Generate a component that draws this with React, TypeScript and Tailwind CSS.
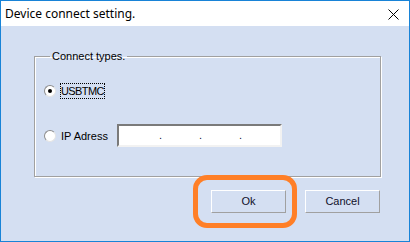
import React from 'react';

const body = { fontFamily: '"Liberation Sans", Arial, sans-serif' };

function Radio({ checked }: { checked?: boolean }) {
  return (
    <div className="w-[12px] h-[12px] rounded-full bg-white border border-t-[#8c8c8c] border-l-[#8c8c8c] border-r-[#e4e4e4] border-b-[#e4e4e4] flex items-center justify-center shrink-0">
      {checked && <div className="w-[4px] h-[4px] rounded-full bg-black" />}
    </div>
  );
}

function Button({ label }: { label: string }) {
  return (
    <button className="w-[75px] h-[23px] border border-t-white border-l-white border-r-[#a0a0a0] border-b-[#a0a0a0] bg-transparent text-[11px] text-[#10102a] leading-none flex items-center justify-center">
      {label}
    </button>
  );
}

export default function App() {
  return (
    <div className="relative w-[410px] h-[242px] border border-[#1883d7] bg-[#d4dff2] flex flex-col overflow-hidden" style={body}>
      <div className="h-[25px] bg-white flex items-center justify-between pl-[4px] pr-[10px] shrink-0">
        <span className="text-[12px] text-black" style={{ fontFamily: '"Noto Sans", "Open Sans", sans-serif' }}>
          Device connect setting.
        </span>
        <svg width="11" height="11" viewBox="0 0 11 11" className="mt-[1px]">
          <path d="M0.5 0.5 L10.5 10.5 M10.5 0.5 L0.5 10.5" stroke="#000" strokeWidth="1" fill="none" />
        </svg>
      </div>

      <div className="flex flex-col pl-[33px] pr-[27px] pt-[24px]">
        <fieldset className="w-[347px] h-[127px] border border-[#a0a0a0] shadow-[1px_1px_0_#fff,inset_1px_1px_0_#fff] pl-[9px]">
          <legend className="ml-[6px] px-[2px] text-[11px] leading-[13px] text-black">Connect types.</legend>
          <div className="flex items-center mt-[20px] h-[16px]">
            <Radio checked />
            <span className="ml-[4px] border border-dotted border-black px-[0px] text-[11px] leading-[14px] text-black tracking-[-0.6px]">
              USBTMC
            </span>
          </div>
          <div className="flex items-center mt-[25px] h-[23px]">
            <Radio />
            <span className="ml-[5px] text-[11px] leading-[14px] text-black">IP Adress</span>
            <div className="ml-[9px] w-[165px] h-[23px] bg-white border-2 border-t-[#7a7a7a] border-l-[#7a7a7a] border-r-[#f2f2f2] border-b-[#f2f2f2] flex items-center pl-[40px] text-[11px] text-[#101040]">
              <span className="w-[40px]">.</span>
              <span className="w-[40px]">.</span>
              <span className="w-[40px]">.</span>
            </div>
          </div>
        </fieldset>

        <div className="flex justify-end gap-[19px] pr-[2px] mt-[13px]">
          <Button label="Ok" />
          <Button label="Cancel" />
        </div>
      </div>

      <div className="absolute left-[192px] top-[174px] w-[104px] h-[53px] border-[5px] border-[#ff7f27] rounded-[14px]" />
    </div>
  );
}
